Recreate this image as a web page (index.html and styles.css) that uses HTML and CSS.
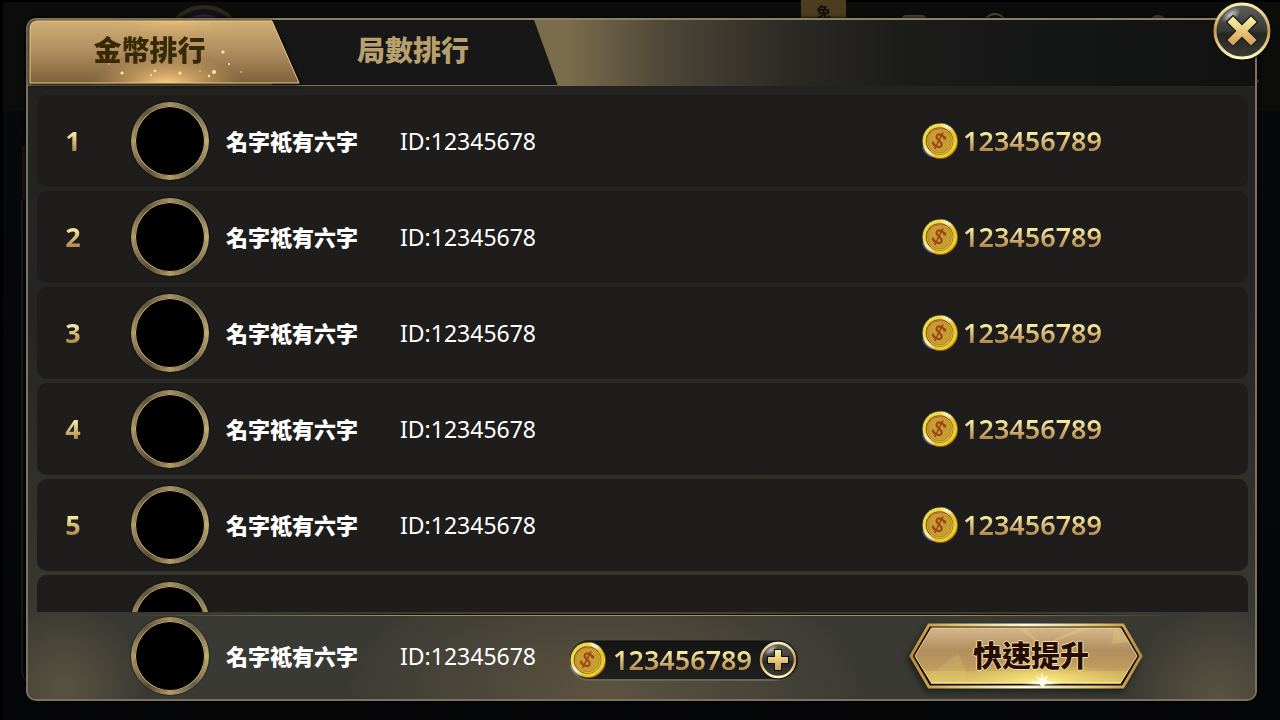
FILE: index.html
```html
<!DOCTYPE html>
<html lang="zh-Hant">
<head>
    <meta charset="UTF-8">
    <meta name="viewport" content="width=device-width, initial-scale=1.0">
    <title>金幣排行</title>
    <link rel="stylesheet" href="styles.css">
</head>
<body>
    <!-- Shared icon shapes -->
    <svg class="sprite" width="0" height="0" aria-hidden="true">
        <defs>
            <linearGradient id="gold" x1="0" y1="0" x2="0" y2="1">
                <stop offset="0" stop-color="#fdf6a6"/>
                <stop offset="1" stop-color="#d09a55"/>
            </linearGradient>
            <linearGradient id="ring" x1="0" y1="0" x2="0" y2="1">
                <stop offset="0" stop-color="#fbf0ac"/>
                <stop offset=".5" stop-color="#c4954d"/>
                <stop offset="1" stop-color="#fffbc0"/>
            </linearGradient>
            <linearGradient id="glass" x1="0" y1="0" x2="0" y2="1">
                <stop offset="0" stop-color="#5f5f5c"/>
                <stop offset=".5" stop-color="#373733"/>
                <stop offset=".55" stop-color="#252522"/>
                <stop offset="1" stop-color="#3c3c37"/>
            </linearGradient>
            <radialGradient id="shine">
                <stop offset="0" stop-color="#fff" stop-opacity=".9"/>
                <stop offset="1" stop-color="#fff" stop-opacity="0"/>
            </radialGradient>
            <linearGradient id="coin-rim" x1="0" y1="0" x2="1" y2="1">
                <stop offset="0" stop-color="#cdbb22"/>
                <stop offset=".12" stop-color="#e6d843"/>
                <stop offset=".3" stop-color="#e9dc50"/>
                <stop offset=".5" stop-color="#d9c026"/>
                <stop offset=".8" stop-color="#e3d52c"/>
                <stop offset="1" stop-color="#a2521c"/>
            </linearGradient>
        </defs>
        <symbol id="icon-coin" viewBox="0 0 36 36">
            <circle cx="18.500" cy="18.500" r="17.500" fill="#a5511f"/>
            <circle cx="17.800" cy="17.800" r="17.300" fill="url(#coin-rim)"/>
            <ellipse cx="25" cy="4" rx="9" ry="3" transform="rotate(30 25 4)" fill="url(#shine)"/>
            <ellipse cx="6" cy="28" rx="9" ry="4" transform="rotate(48 6 28)" fill="url(#shine)"/>
            <circle cx="17.500" cy="18" r="13.800" fill="#9c4f22"/>
            <circle cx="17.800" cy="18.300" r="12.900" fill="#d8bd35"/>
            <circle cx="17.500" cy="18" r="11.800" fill="#c79f2f" stroke="#b08228" stroke-width=".8"/>
            <g fill="none" stroke="#a0441f" transform="rotate(27 17 17.500)">
                <path d="M21.500 14v-3M12.500 24v-3" stroke-width="1.500"/>
                <path d="M21.500 14Q20.500 11.500 17 11.500 13 11.500 13 14.300 13 16.600 17 17.500 21.500 18.500 21.500 21 21.500 24 17 24 13.500 24 12.500 21.500" stroke-width="2.200"/>
                <path d="M17 8.500V27" stroke-width="1.600"/>
            </g>
        </symbol>
    </svg>

    <!-- Dimmed lobby behind the dialog -->
    <div class="lobby" aria-hidden="true">
        <svg class="lobby-art" width="1280" height="720" viewBox="0 0 1280 720">
            <rect width="1280" height="111" fill="#0c0c0a"/>
            <rect width="1280" height="2" fill="#000"/>
            <rect width="3" height="720" fill="#000"/>
            <circle cx="204" cy="45" r="38" fill="#151019" stroke="#2e2719" stroke-width="4"/>
            <path d="M187 19q17-9 34 0z" fill="#34283e"/>
            <rect x="22" y="145" width="6" height="55" rx="3" fill="#171614"/>
            <path d="M22 200v470q0 9 6 12" fill="none" stroke="#1a1816" stroke-width="2"/>
            <rect x="902" y="15" width="24" height="8" rx="4" fill="#4b453d"/>
            <circle cx="995" cy="25" r="11" fill="none" stroke="#4b453d" stroke-width="2"/>
            <circle cx="1158" cy="25" r="10" fill="#4b453d"/>
            <circle cx="1257" cy="81" r="2" fill="#4b453d"/>
        </svg>
        <span class="lobby-tag">免</span>
    </div>

    <main class="dialog">
        <header class="tabs" role="tablist">
            <button class="tab tab-active" role="tab" aria-selected="true">
                <svg class="tab-shape" viewBox="0 0 271 64" aria-hidden="true">
                    <defs>
                        <linearGradient id="tab-fill" x1="0" y1="0" x2="0" y2="1">
                            <stop offset="0" stop-color="#cfad74"/>
                            <stop offset=".45" stop-color="#b39161"/>
                            <stop offset="1" stop-color="#7e603c"/>
                        </linearGradient>
                        <radialGradient id="tab-glow">
                            <stop offset="0" stop-color="#ffd387"/>
                            <stop offset="1" stop-color="#d8a660" stop-opacity="0"/>
                        </radialGradient>
                        <clipPath id="tab-clip"><path d="M1 63V9Q1 1 9 1H243L270 63Z"/></clipPath>
                    </defs>
                    <path d="M1 63V9Q1 1 9 1H243L270 63Z" fill="url(#tab-fill)"/>
                    <g clip-path="url(#tab-clip)">
                        <ellipse cx="138" cy="64" rx="75" ry="30" fill="url(#tab-glow)"/>
                        <ellipse cx="145" cy="0" rx="80" ry="18" fill="url(#tab-glow)" opacity=".5"/>
                    </g>
                    <path d="M1 63V9Q1 1 9 1H243L270 63Z" fill="none" stroke="#efcd88"/>
                    <g fill="#ffe9b4">
                        <circle cx="93" cy="53" r="1.600"/><circle cx="126" cy="51" r="1.300"/>
                        <circle cx="122" cy="55" r="1"/><circle cx="151" cy="53" r="1.600"/>
                        <circle cx="185" cy="52" r="2"/><circle cx="180" cy="56" r="1.200"/>
                        <circle cx="194" cy="32" r="1.600"/><circle cx="200" cy="44" r="1"/>
                        <circle cx="171" cy="51" r=".7"/><circle cx="212" cy="52" r=".7"/>
                        <circle cx="80" cy="44" r=".7"/>
                    </g>
                </svg>
                <span class="tab-label">金幣排行</span>
            </button>
            <button class="tab tab-rounds" role="tab" aria-selected="false">
                <span class="tab-label">局數排行</span>
            </button>
        </header>

        <ol class="ranking">
            <li class="row">
                <span class="rank gold-text">1</span>
                <span class="avatar"></span>
                <span class="name">名字祗有六字</span>
                <span class="player-id">ID:12345678</span>
                <span class="score"><svg class="coin"><use href="#icon-coin"/></svg><span class="amount gold-text">123456789</span></span>
            </li>
            <li class="row">
                <span class="rank gold-text">2</span>
                <span class="avatar"></span>
                <span class="name">名字祗有六字</span>
                <span class="player-id">ID:12345678</span>
                <span class="score"><svg class="coin"><use href="#icon-coin"/></svg><span class="amount gold-text">123456789</span></span>
            </li>
            <li class="row">
                <span class="rank gold-text">3</span>
                <span class="avatar"></span>
                <span class="name">名字祗有六字</span>
                <span class="player-id">ID:12345678</span>
                <span class="score"><svg class="coin"><use href="#icon-coin"/></svg><span class="amount gold-text">123456789</span></span>
            </li>
            <li class="row">
                <span class="rank gold-text">4</span>
                <span class="avatar"></span>
                <span class="name">名字祗有六字</span>
                <span class="player-id">ID:12345678</span>
                <span class="score"><svg class="coin"><use href="#icon-coin"/></svg><span class="amount gold-text">123456789</span></span>
            </li>
            <li class="row">
                <span class="rank gold-text">5</span>
                <span class="avatar"></span>
                <span class="name">名字祗有六字</span>
                <span class="player-id">ID:12345678</span>
                <span class="score"><svg class="coin"><use href="#icon-coin"/></svg><span class="amount gold-text">123456789</span></span>
            </li>
            <li class="row">
                <span class="rank"></span>
                <span class="avatar"></span>
            </li>
        </ol>

        <footer class="self">
            <span class="avatar"></span>
            <span class="name">名字祗有六字</span>
            <span class="player-id">ID:12345678</span>
            <div class="wallet">
                <svg class="coin"><use href="#icon-coin"/></svg>
                <span class="amount gold-text">123456789</span>
                <button class="round-btn add-btn" aria-label="加值">
                    <svg viewBox="0 0 38 38">
                        <circle cx="19" cy="19" r="17" fill="url(#glass)" stroke="url(#ring)" stroke-width="2.500"/>
                        <ellipse cx="12" cy="9" rx="8" ry="4" transform="rotate(-35 12 9)" fill="url(#shine)" opacity=".7"/>
                        <path d="M16 9h6v7h7v6h-7v7h-6v-7H9v-6h7z" fill="url(#gold)" stroke="#11110f" stroke-width="2" paint-order="stroke"/>
                    </svg>
                </button>
            </div>
            <button class="boost-btn">
                <svg class="boost-shape" viewBox="0 0 236 68" aria-hidden="true">
                    <defs>
                        <linearGradient id="boost-fill" x1="0" y1="0" x2="0" y2="1">
                            <stop offset="0" stop-color="#d5b78b"/>
                            <stop offset=".4" stop-color="#b18f5e"/>
                            <stop offset=".7" stop-color="#bd9a5c"/>
                            <stop offset="1" stop-color="#dcbb63"/>
                        </linearGradient>
                        <linearGradient id="boost-edge">
                            <stop offset="0" stop-color="#b98a3c"/>
                            <stop offset=".2" stop-color="#e6c56f"/>
                            <stop offset=".5" stop-color="#fffbd8"/>
                            <stop offset=".8" stop-color="#e6c56f"/>
                            <stop offset="1" stop-color="#b98a3c"/>
                        </linearGradient>
                        <radialGradient id="boost-glow">
                            <stop offset="0" stop-color="#fff58a"/>
                            <stop offset="1" stop-color="#f5dd6a" stop-opacity="0"/>
                        </radialGradient>
                        <clipPath id="boost-clip"><path d="M6 34 23 6H213L230 34 213 61H23Z"/></clipPath>
                    </defs>
                    <path d="M3 34 21 3H215L233 34 215 65H21Z" fill="#0f0e0b" stroke="url(#boost-edge)" stroke-width="3"/>
                    <path d="M7 34 23.500 6H212.500L229 34 212.500 61H23.500Z" fill="url(#boost-fill)" stroke="#f0d58e"/>
                    <g clip-path="url(#boost-clip)">
                        <path d="M20 54 50 32l8 16v14H20z" fill="#d8c36c" opacity=".3"/>
                        <path d="M203 22 207 6l15 14z" fill="#e2c879" opacity=".4"/>
                        <path d="M110 6h8l16 18zM130 25 184 6h-12zM134 60 106 22l8-2z" fill="#eacb7d" opacity=".4"/>
                        <path d="M6 49H230V62H6z" fill="#f3df77" opacity=".25"/>
                        <ellipse cx="134" cy="62" rx="80" ry="24" fill="url(#boost-glow)"/>
                    </g>
                    <path d="M23 61H213" stroke="#fff3a8" stroke-width="1"/>
                    <path d="M134 50l1.500 6 5-3-3 5 9 3-9 1-3 4-3-4-9-1 9-2-4-6 5 4z" fill="#fffde0"/>
                    <ellipse cx="134" cy="61" rx="22" ry="3" fill="url(#shine)"/>
                </svg>
                <span class="boost-label">快速提升</span>
            </button>
        </footer>

        <button class="round-btn close-btn" aria-label="關閉">
            <svg viewBox="0 0 58 58">
                <circle cx="29" cy="29" r="27" fill="url(#glass)" stroke="url(#ring)" stroke-width="3"/>
                <ellipse cx="18" cy="13" rx="11" ry="6" transform="rotate(-35 18 13)" fill="url(#shine)" opacity=".8"/>
                <path d="M20 14.500 29 23.500 38 14.500 43.500 20 34.500 29 43.500 38 38 43.500 29 34.500 20 43.500 14.500 38 23.500 29 14.500 20Z" fill="url(#gold)" stroke="#22211e" stroke-width="3" paint-order="stroke"/>
            </svg>
        </button>
    </main>
</body>
</html>
```
FILE: styles.css
```css
:root {
    --panel-border: #7d7262;
    --row-bg: #1e1d1b;
    --gold-light: #fbf0a5;
    --gold-dark: #b0834a;
    --cjk: "Noto Sans", "Noto Sans CJK TC", sans-serif;
}

* {
    box-sizing: border-box;
}

body {
    margin: 0;
    height: 100vh;
    padding: 18px 23px 19px 26px;
    background: linear-gradient(#08090b, #050608);
    color: #fff;
    font-family: var(--cjk);
    overflow: hidden;
}

button {
    padding: 0;
    border: none;
    background: none;
    font-family: inherit;
    cursor: pointer;
}

.sprite {
    position: absolute;
}

/* Lobby */
.lobby {
    position: absolute;
    inset: 0;
    overflow: hidden;
}

.lobby-tag {
    position: absolute;
    left: 801px;
    top: 0;
    width: 45px;
    height: 20px;
    background: #4c3d1e;
    color: #17120a;
    font-size: 14px;
    font-weight: 900;
    line-height: 24px;
    text-align: center;
}

/* Dialog */
.dialog {
    position: relative;
    height: 100%;
    display: flex;
    flex-direction: column;
    border: 2px solid var(--panel-border);
    border-top-color: #8c8262;
    border-radius: 10px;
    background: linear-gradient(#222321, #252523 45%, #3a3a33 90%);
    box-shadow: 0 0 4px #000;
}

.tabs {
    display: flex;
    flex: none;
    height: 67px;
    padding: 0 1px;
    border-radius: 8px 8px 0 0;
    border-bottom: 1px solid #232321;
    background: linear-gradient(90deg, #7a6c4c 500px, #7a6c4c 540px, #4d4637 640px, #2b2a25 760px, #1b1b1a 880px, #151616 1020px, #111);
}

.tab {
    position: relative;
    height: 64px;
    font-size: 28px;
    font-weight: 900;
    line-height: 40px;
}

.tab-active {
    z-index: 1;
    width: 271px;
    padding: 0 30px 4px 0;
    color: #372806;
    filter: drop-shadow(0 1px 2px #000);
}

.tab-shape {
    position: absolute;
    inset: 0;
}

.tab-rounds {
    width: 286px;
    height: 66px;
    margin-left: -28px;
    padding: 0 4px 6px 0;
    background: #171717;
    border-bottom: 1px solid #806b4b;
    color: #b7a06e;
    clip-path: polygon(0 0, 262px 0, 100% 100%, 0 100%);
}

.tab-label {
    position: relative;
}

/* Ranking */
.ranking {
    flex: 1;
    min-height: 0;
    margin: 0 7px 0 9px;
    padding: 8px 0 0;
    display: flex;
    flex-direction: column;
    gap: 4px;
    overflow: hidden;
    list-style: none;
}

.row {
    flex: none;
    display: flex;
    align-items: center;
    height: 92px;
    padding-right: 146px;
    border-radius: 10px;
    background: var(--row-bg);
}

.rank {
    width: 72px;
    margin-right: 22px;
    font-size: 27px;
    font-weight: 700;
    line-height: 36px;
    text-align: center;
}

.gold-text {
    background: linear-gradient(var(--gold-light) 25%, var(--gold-dark) 80%);
    -webkit-background-clip: text;
    background-clip: text;
    color: transparent;
}

.avatar {
    flex: none;
    width: 78px;
    height: 78px;
    border: 4px solid transparent;
    border-radius: 50%;
    background:
        linear-gradient(#000, #000) padding-box,
        conic-gradient(#a8905e, #66664c 40deg, #c4ac70 90deg, #8d7c50 125deg, #60604a 140deg, #b39c62 180deg, #5a4c36 215deg, #b09a64 270deg, #62563e 320deg, #a8905e) border-box;
    box-shadow: inset 0 0 0 1px #cdb474, 0 0 2px #000;
}

.name {
    width: 174px;
    margin-left: 17px;
    font-size: 22px;
    font-weight: 900;
    line-height: 32px;
}

.player-id {
    font-size: 23px;
    line-height: 32px;
}

.score {
    display: flex;
    align-items: center;
    gap: 5px;
    margin-left: auto;
}

.coin {
    flex: none;
    width: 36px;
    height: 36px;
}

.amount {
    font-size: 27px;
    font-weight: 600;
    line-height: 36px;
}

/* Own entry */
.self {
    position: relative;
    flex: none;
    display: flex;
    align-items: center;
    height: 87px;
    padding: 0 111px 0 103px;
    border-radius: 0 0 8px 8px;
    background:
        radial-gradient(circle at 36px 75px, #5b5340, transparent 80px),
        radial-gradient(ellipse 260px 130px at 47% 90%, #5d5340, transparent),
        radial-gradient(circle at 97% 100%, #5b5340, transparent 90px),
        #3a3a34;
}

.self::before {
    content: "";
    position: absolute;
    left: 0;
    right: 0;
    top: 2px;
    height: 2px;
    background: linear-gradient(90deg, transparent 8%, #b48b4e 30%, #b48b4e 75%, transparent 93%) 0 100% / 100% 1px no-repeat,
        linear-gradient(90deg, transparent 20%, #111 32%, #111 80%, transparent 90%) 0 0 / 100% 1px no-repeat;
}

.wallet {
    display: flex;
    align-items: center;
    gap: 7px;
    height: 38px;
    margin: 8px 0 0 34px;
    border-radius: 20px;
    background: linear-gradient(#141413, #20201e);
    box-shadow: 0 2px 0 #67655a, 0 -1px 0 #2c2a24;
}

.round-btn svg {
    display: block;
    width: 100%;
    height: 100%;
    filter: drop-shadow(1px 1px 1px #000);
}

.add-btn {
    width: 38px;
    height: 38px;
}

.boost-btn {
    position: relative;
    width: 236px;
    height: 68px;
    margin-left: auto;
    padding-left: 10px;
    color: #260c04;
    font-size: 29px;
    font-weight: 900;
    line-height: 40px;
}

.boost-shape {
    position: absolute;
    inset: 0;
    filter: drop-shadow(-2px 3px 3px #1b1b18);
}

.boost-label {
    position: relative;
    text-shadow: 1px 0 #f4dfa5, -1px 0 #f4dfa5, 0 1px #f4dfa5, 0 -1px #f4dfa5;
}

.close-btn {
    position: absolute;
    top: -18px;
    right: -16px;
    width: 58px;
    height: 58px;
}
```
